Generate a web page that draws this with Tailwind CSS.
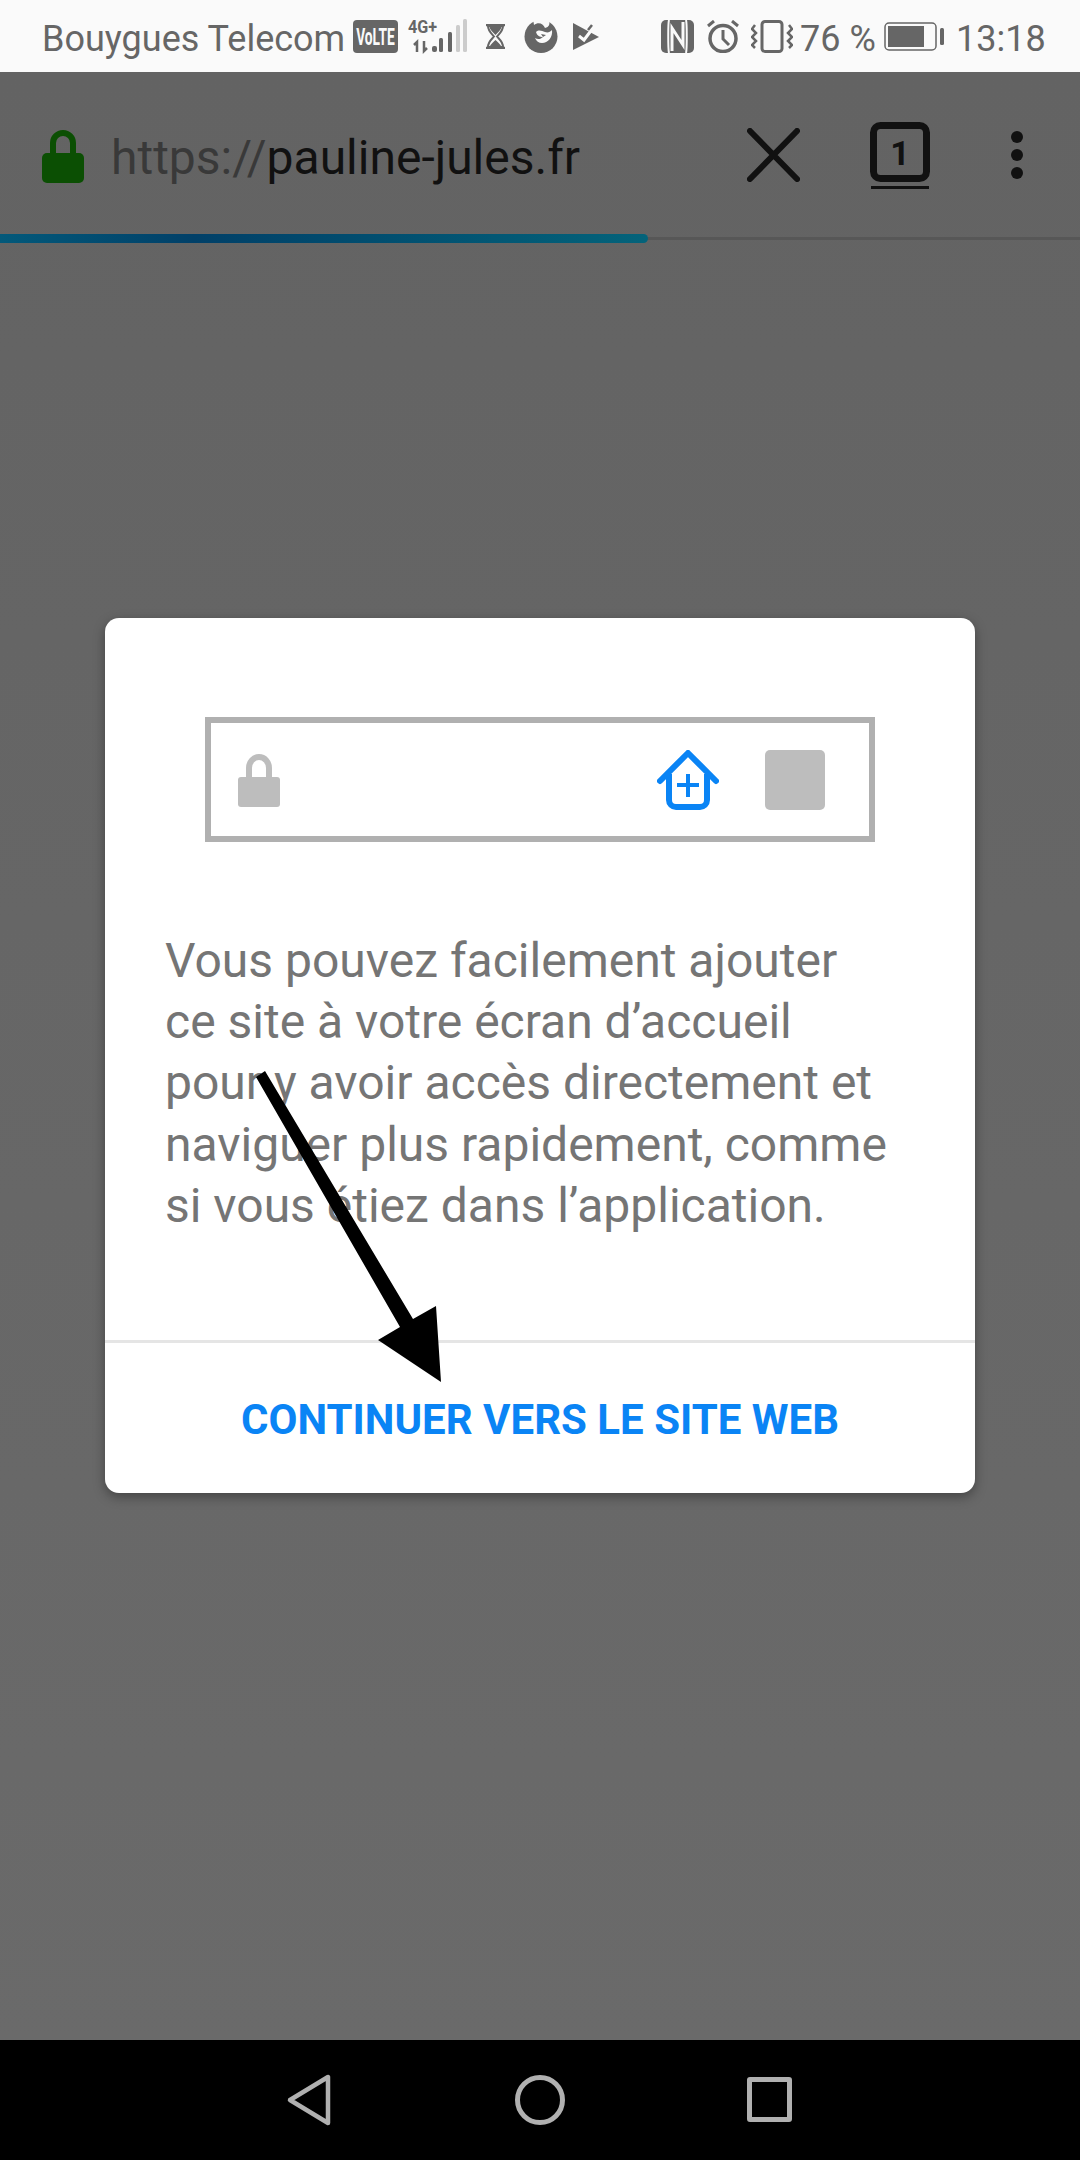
<!DOCTYPE html>
<html lang="fr">
<head>
    <meta charset="UTF-8">
    <meta name="viewport" content="width=device-width, initial-scale=1.0">
    <title>pauline-jules.fr</title>
    <script src="https://cdn.jsdelivr.net/npm/@tailwindcss/browser@4"></script>
</head>
<body class="bg-black">
    <div class="relative w-[1080px] h-[2160px] flex flex-col overflow-hidden font-['Roboto',sans-serif]">
        <!-- Status bar -->
        <div class="h-[72px] shrink-0 bg-[#fafafa] flex items-center pl-[42px] text-[#666666] text-[36px] leading-none">
            <span class="w-[301px] mt-[6px] whitespace-nowrap">Bouygues Telecom</span>
            <svg class="ml-[10px]" width="45" height="33" viewBox="0 0 45 33">
                <rect width="45" height="33" rx="4" fill="#666666"/>
                <text transform="translate(22.500 25) scale(0.6 1)" text-anchor="middle" font-family="Roboto" font-weight="700" font-size="23" fill="#fafafa">VoLTE</text>
            </svg>
            <svg class="ml-[10px] overflow-visible" width="60" height="34" viewBox="0 0 60 34">
                <text transform="translate(0 14) scale(0.85 1)" font-family="Roboto" font-weight="700" font-size="19" fill="#666666">4G+</text>
                <path d="M9 33V23l-3 3M16 22v10l3-3" fill="none" stroke="#666666" stroke-width="2.500"/>
                <rect x="24" y="27" width="5" height="6" rx="2" fill="#666666"/>
                <rect x="31" y="19" width="4" height="14" rx="1.500" fill="#666666"/>
                <rect x="40" y="13" width="4" height="20" rx="1.500" fill="#666666"/>
                <rect x="48" y="6" width="4" height="27" rx="1.500" fill="#cccccc"/>
                <rect x="55" y="0" width="4" height="33" rx="1.500" fill="#cccccc"/>
            </svg>
            <svg class="ml-[18px]" width="19" height="25" viewBox="0 0 19 25">
                <path d="M0 1h19M0 24h19" stroke="#666666" stroke-width="2.400"/>
                <path d="M2 2h15c0 5-4 8-6 10.500c2 2.500 6 5 6 10.500H2c0-5.500 4-8 6-10.500C6 10 2 7 2 2z" fill="#fafafa" stroke="#666666" stroke-width="2"/>
                <path d="M3 2h13c-1 4-4 6-6.500 9C7 8 4 6 3 2zM3.500 23c1-3 4-5 6-7 2 2 5 4 6 7z" fill="#666666"/>
            </svg>
            <svg class="ml-[19px]" width="34" height="34" viewBox="0 0 34 34">
                <circle cx="17" cy="17.500" r="16.500" fill="#666666"/>
                <path d="M9 0L10 6C14 3 19 4 21 9C25 8 27 5 24 0z" fill="#fafafa"/>
                <path d="M12 13c3-3 6-1 9 0 3 1 5 0 7-2 1 7-4 13-10 13-3 0-6-2-7-5 3 2 6 1 8-1-3 0-6-1-7-5z" fill="#fafafa"/>
                <path d="M17 15l5 1-3 2z" fill="#666666"/>
            </svg>
            <svg class="ml-[15px]" width="26" height="27" viewBox="0 0 26 27">
                <path d="M0 0l26 14L0 27z" fill="#666666"/>
                <path d="M6 13l5 4 9-12" fill="none" stroke="#fafafa" stroke-width="3"/>
                <path d="M15 7l4-5" stroke="#666666" stroke-width="2.500"/>
            </svg>
            <svg class="ml-[62px]" width="33" height="33" viewBox="0 0 33 33">
                <rect width="33" height="33" rx="5" fill="#666666"/>
                <path d="M8 0c-1 3-1 29 0 33M25 0c1 3 1 29 0 33" fill="none" stroke="#fafafa" stroke-width="2"/>
                <path d="M11 31V8l11 17V2" fill="none" stroke="#fafafa" stroke-width="3"/>
            </svg>
            <svg class="ml-[13px]" width="32" height="33" viewBox="0 0 32 33">
                <circle cx="16" cy="18.500" r="13" fill="none" stroke="#666666" stroke-width="3.500"/>
                <path d="M16 10v9l6 6" fill="none" stroke="#666666" stroke-width="3"/>
                <path d="M1 6l6-5M31 6l-6-5" stroke="#666666" stroke-width="3"/>
            </svg>
            <svg class="ml-[12px]" width="42" height="33" viewBox="0 0 42 33">
                <rect x="11" y="1.500" width="20" height="30" rx="3" fill="none" stroke="#666666" stroke-width="3"/>
                <path d="M4 5L1 9l4 4-4 4 4 4-4 4 3 3M38 5l3 4-4 4 4 4-4 4 4 4-3 3" fill="none" stroke="#666666" stroke-width="2.500"/>
            </svg>
            <span class="ml-[7px] w-[73px] mt-[6px] whitespace-nowrap">76 %</span>
            <svg class="ml-[11px]" width="60" height="29" viewBox="0 0 60 29">
                <rect x="1" y="1" width="51" height="27" rx="4" fill="none" stroke="#666666" stroke-width="1.500"/>
                <rect x="4" y="4" width="36" height="21" fill="#666666"/>
                <rect x="56" y="6" width="4" height="17" rx="1.500" fill="#666666"/>
            </svg>
            <span class="ml-[12px] mt-[6px] whitespace-nowrap">13:18</span>
        </div>

        <!-- Page under the dimming layer -->
        <div class="flex-1 flex flex-col bg-linear-to-b from-[#636363] to-[#6a6a6a]">
            <div class="h-[162px] shrink-0 flex items-center pl-[42px]">
                <svg class="mt-[6px]" width="42" height="54" viewBox="0 0 42 54">
                    <path d="M11 26V14a10 10 0 0 1 20 0v12" fill="none" stroke="#0b4f03" stroke-width="6"/>
                    <rect y="24" width="42" height="30" rx="5" fill="#0b4f03"/>
                </svg>
                <div class="ml-[27px] mt-[9px] w-[480px] text-[48px] leading-none whitespace-nowrap text-[#111111]"><span class="text-[#393939]">https://</span>pauline-jules.fr</div>
                <svg class="ml-[156px] mt-[4px]" width="53" height="54" viewBox="0 0 53 54">
                    <path d="M3 3l47 48M50 3L3 51" stroke="#111111" stroke-width="6" stroke-linecap="round"/>
                </svg>
                <svg class="ml-[70px] mt-[6px]" width="60" height="68" viewBox="0 0 60 68">
                    <rect x="3.500" y="3.500" width="53" height="53" rx="7" fill="none" stroke="#111111" stroke-width="7"/>
                    <rect x="1" y="64" width="58" height="3" fill="#111111"/>
                    <text x="30" y="43" text-anchor="middle" font-family="Roboto" font-weight="700" font-size="34" fill="#111111">1</text>
                </svg>
                <div class="ml-[81px] mt-[4px] flex flex-col gap-[6px]">
                    <span class="w-[12px] h-[12px] rounded-full bg-[#111111]"></span>
                    <span class="w-[12px] h-[12px] rounded-full bg-[#111111]"></span>
                    <span class="w-[12px] h-[12px] rounded-full bg-[#111111]"></span>
                </div>
            </div>
            <!-- Progress -->
            <div class="relative h-[9px] shrink-0">
                <div class="absolute left-0 right-0 top-[3px] h-[3px] bg-[#575757]"></div>
                <div class="absolute left-0 top-0 h-[9px] w-[648px] rounded-r-full bg-linear-to-r from-[#03597a] via-[#014068] via-30% to-[#04637a]"></div>
            </div>

            <!-- Dialog -->
            <div class="ml-[105px] mt-[375px] w-[870px] h-[875px] bg-white rounded-[14px] shadow-[0_4px_12px_rgba(0,0,0,0.35)] flex flex-col">
                <div class="mt-[99px] ml-[100px] w-[670px] h-[125px] border-[6px] border-[#b0b0b0] flex items-center pl-[27px] pr-[44px]">
                    <svg width="42" height="54" viewBox="0 0 42 54">
                        <path d="M11 26V15a10 11 0 0 1 20 0v11" fill="none" stroke="#bdbdbd" stroke-width="6"/>
                        <rect y="24" width="42" height="30" rx="3" fill="#bdbdbd"/>
                    </svg>
                    <svg class="ml-auto" width="62" height="60" viewBox="0 0 62 60">
                        <path d="M3 31L31 3l28 28" fill="none" stroke="#0a84f5" stroke-width="6" stroke-linecap="round" stroke-linejoin="round"/>
                        <path d="M12 24v26a7 7 0 0 0 7 7h24a7 7 0 0 0 7-7V24" fill="none" stroke="#0a84f5" stroke-width="6"/>
                        <path d="M31 24v23M20 35h22" stroke="#0a84f5" stroke-width="4"/>
                    </svg>
                    <div class="ml-[46px] w-[60px] h-[60px] rounded-[5px] bg-[#bdbdbd]"></div>
                </div>
                <p class="mt-[88px] ml-[60px] text-[48px] leading-[61.2px] text-[#757575] whitespace-nowrap">Vous pouvez facilement ajouter<br>ce site à votre écran d’accueil<br>pour y avoir accès directement et<br>naviguer plus rapidement, comme<br>si vous étiez dans l’application.</p>
                <div class="mt-auto h-[3px] bg-[#e5e5e5]"></div>
                <div class="h-[150px] pt-[2px] flex items-center justify-center text-[42px] font-bold text-[#0a84f5] whitespace-nowrap">CONTINUER VERS LE SITE WEB</div>
            </div>
        </div>

        <!-- Navigation bar -->
        <div class="h-[120px] shrink-0 bg-black relative">
            <svg class="absolute left-[286px] top-[33px]" width="46" height="54" viewBox="0 0 46 54">
                <path d="M4 27L42 4v46z" fill="none" stroke="#b0b0b0" stroke-width="4.500" stroke-linejoin="round"/>
            </svg>
            <div class="absolute left-[515px] top-[35px] w-[50px] h-[50px] rounded-full border-[5px] border-[#b0b0b0]"></div>
            <div class="absolute left-[747px] top-[37px] w-[45px] h-[45px] rounded-[3px] border-[5px] border-[#b0b0b0]"></div>
        </div>

        <!-- Annotation arrow drawn over the screenshot -->
        <svg class="absolute left-0 top-0 pointer-events-none" width="1080" height="2160" viewBox="0 0 1080 2160">
            <path d="M256 1077L265 1071L413 1319L436 1306L441 1382L378 1340L400 1327z" fill="#000000"/>
        </svg>
    </div>
</body>
</html>
